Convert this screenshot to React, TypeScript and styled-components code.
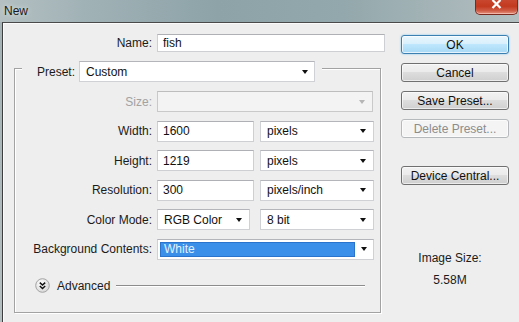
import React from "react";
import styled, { createGlobalStyle } from "styled-components";

const GlobalStyle = createGlobalStyle`
  html, body { margin: 0; padding: 0; }
  body { width: 519px; height: 322px; overflow: hidden; background: #a9b6b9; }
  * { box-sizing: border-box; }
`;

const Window = styled.div`
  width: 519px;
  height: 322px;
  display: flex;
  flex-direction: column;
  overflow: hidden;
  font-family: "Liberation Sans", Arial, sans-serif;
  font-size: 12px;
  color: #1b1b1b;
  background: linear-gradient(180deg, #a3b1b4, #b4bfc1);
`;

const TitleBar = styled.div`
  height: 22px;
  flex: none;
  display: flex;
  align-items: flex-start;
  justify-content: space-between;
  background: linear-gradient(90deg, #b4c0c2 0%, #a1b2b6 16%, #8da3a8 42%, #93a8ac 66%, #a6b5b8 86%, #b3bfc1 100%);
`;

const Title = styled.span`
  margin: 4px 0 0 4px;
  font-size: 12px;
  line-height: 14px;
  color: #1a1a1a;
  text-shadow: 0 0 5px rgba(255, 255, 255, 0.7);
`;

const CloseButton = styled.div`
  width: 43px;
  height: 15px;
  margin-right: 1px;
  border: 1px solid #7a2a1e;
  border-top: none;
  border-radius: 0 0 5px 5px;
  background: linear-gradient(180deg, #c9472f 0%, #c2391f 45%, #cf5a43 75%, #e4937f 100%);
  box-shadow: inset 0 -1px 0 rgba(255, 210, 200, 0.6);
  display: flex;
  justify-content: center;
  align-items: flex-start;
`;

const Frame = styled.div`
  flex: 1;
  min-height: 0;
  display: flex;
  padding-left: 2px;
`;

const Body = styled.div`
  flex: 1;
  display: flex;
  align-items: flex-start;
  background: #eeeeee;
  border-left: 1px solid #3e3e3e;
  border-top: 1px solid #4a4a4a;
  box-shadow: inset 1px 1px 0 #fbfbfb;
`;

const LeftColumn = styled.div`
  width: 382px;
  flex: none;
  padding: 11px 0 0 11px;
  display: flex;
  flex-direction: column;
`;

const NameRow = styled.div`
  display: grid;
  grid-template-columns: 138px 228px;
  column-gap: 5px;
  align-items: center;
`;

const Label = styled.span<{ $disabled?: boolean }>`
  text-align: right;
  white-space: nowrap;
  line-height: 14px;
  color: ${(p) => (p.$disabled ? "#a2a2a2" : "#1b1b1b")};
`;

const TextField = styled.div<{ $width?: number; $height?: number }>`
  width: ${(p) => (p.$width ? `${p.$width}px` : "100%")};
  height: ${(p) => p.$height ?? 21}px;
  background: #ffffff;
  border: 1px solid #cdcfd3;
  border-top-color: #aeb0b5;
  padding-left: 5px;
  display: flex;
  align-items: center;
  color: #111;
  line-height: 14px;
`;

const GroupBox = styled.div`
  margin-top: 16px;
  width: 367px;
  border: 1px solid #a2a2a2;
  box-shadow: 1px 1px 0 #ffffff, inset 1px 1px 0 #ffffff;
  display: flex;
  flex-direction: column;
  padding-bottom: 18px;
`;

const GroupHeader = styled.div`
  align-self: flex-start;
  margin: -8px 0 0 7px;
  padding: 0 7px 0 15px;
  display: flex;
  align-items: center;
  gap: 4px;
  background: #eeeeee;
`;

const FieldGrid = styled.div`
  margin-top: 9px;
  display: grid;
  grid-template-columns: 137px 217px;
  column-gap: 5px;
  row-gap: 8.5px;
  grid-auto-rows: 21px;
  align-items: center;
`;

const Pair = styled.div`
  display: flex;
  justify-content: space-between;
  align-items: center;
  height: 21px;
`;

const SelectBox = styled.div<{ $width?: number; $disabled?: boolean; $pad?: number }>`
  width: ${(p) => (p.$width ? `${p.$width}px` : "100%")};
  height: 21px;
  flex: none;
  display: flex;
  align-items: center;
  justify-content: space-between;
  padding: 0 ${(p) => p.$pad ?? 7}px 0 6px;
  background: ${(p) => (p.$disabled ? "#f3f3f3" : "#ffffff")};
  border: 1px solid ${(p) => (p.$disabled ? "#c9c9c9" : "#cfd1d5")};
  border-top-color: ${(p) => (p.$disabled ? "#bdbdbd" : "#b3b5ba")};
  color: #111;
  line-height: 14px;
`;

const HighlightSelect = styled(SelectBox)`
  padding: 2px 6px 2px 2px;
  align-items: stretch;
`;

const Highlight = styled.span`
  width: 195px;
  background: #3a8fe9;
  border: 1px solid #2a73cc;
  color: #e4f2ff;
  padding-left: 3px;
  display: flex;
  align-items: center;
  line-height: 14px;
`;

const Arrow = styled.span<{ $disabled?: boolean }>`
  width: 0;
  height: 0;
  flex: none;
  align-self: center;
  border-left: 3.5px solid transparent;
  border-right: 3.5px solid transparent;
  border-top: 4px solid ${(p) => (p.$disabled ? "#b5b5b5" : "#101010")};
`;

const AdvancedRow = styled.div`
  margin: 18px 15px 0 20px;
  height: 16px;
  display: flex;
  align-items: center;
`;

const AdvancedText = styled.span`
  margin-left: 7px;
  line-height: 14px;
`;

const Rule = styled.span`
  flex: 1;
  height: 1px;
  margin-left: 6px;
  background: #8c8c8c;
  box-shadow: 0 1px 0 #ffffff;
`;

const RightColumn = styled.div`
  width: 108px;
  margin-left: 16px;
  padding-top: 12px;
  display: flex;
  flex-direction: column;
  gap: 9px;
`;

const Button = styled.div<{ $primary?: boolean; $disabled?: boolean; $gapTop?: number }>`
  height: 19px;
  margin-top: ${(p) => p.$gapTop ?? 0}px;
  border-radius: 3px;
  display: flex;
  align-items: center;
  justify-content: center;
  line-height: 14px;
  color: ${(p) => (p.$disabled ? "#8c8c8c" : "#111")};
  border: 1px solid ${(p) => (p.$primary ? "#3c7fb1" : p.$disabled ? "#b5b9bc" : "#707070")};
  background: ${(p) =>
    p.$primary
      ? "linear-gradient(180deg, #eaf6fd 0%, #d9f0fc 45%, #bee6fd 50%, #a7d9f5 100%)"
      : p.$disabled
      ? "#f4f4f4"
      : "linear-gradient(180deg, #f2f2f2 0%, #ebebeb 45%, #dddddd 50%, #cfcfcf 100%)"};
  box-shadow: ${(p) =>
    p.$primary ? "inset 0 0 0 1px rgba(255,255,255,0.7), 0 0 2px #6fc3f0" : "inset 0 0 0 1px rgba(255,255,255,0.6)"};
`;

const ImageSizeBox = styled.div`
  margin: 57px 10px 0 0;
  display: flex;
  flex-direction: column;
  align-items: center;
  line-height: 14px;
`;

const SizeValue = styled.span`
  margin-top: 8px;
`;

const AdvancedIcon = () => (
  <svg width="15" height="15" viewBox="0 0 15 15">
    <defs>
      <radialGradient id="advg" cx="40%" cy="35%" r="70%">
        <stop offset="0%" stopColor="#ffffff" />
        <stop offset="100%" stopColor="#d6d6d6" />
      </radialGradient>
    </defs>
    <circle cx="7.5" cy="7.5" r="6.8" fill="url(#advg)" stroke="#a3a3a3" strokeWidth="1" />
    <path d="M4.8 4.6 L7.5 7.1 L10.2 4.6" fill="none" stroke="#111" strokeWidth="1.5" />
    <path d="M4.8 8 L7.5 10.5 L10.2 8" fill="none" stroke="#111" strokeWidth="1.5" />
  </svg>
);

const CloseX = () => (
  <svg width="11" height="9" viewBox="0 0 11 9">
    <path d="M1.5 0 L9.5 8 M9.5 0 L1.5 8" stroke="#ffffff" strokeWidth="2.2" />
  </svg>
);

const Select = ({ value, width, disabled, pad }: { value?: string; width?: number; disabled?: boolean; pad?: number }) => (
  <SelectBox $width={width} $disabled={disabled} $pad={pad}>
    <span>{value}</span>
    <Arrow $disabled={disabled} />
  </SelectBox>
);

export default function App() {
  return (
    <>
      <GlobalStyle />
      <Window>
        <TitleBar>
          <Title>New</Title>
          <CloseButton>
            <CloseX />
          </CloseButton>
        </TitleBar>
        <Frame>
          <Body>
            <LeftColumn>
              <NameRow>
                <Label>Name:</Label>
                <TextField $height={18}>fish</TextField>
              </NameRow>
              <GroupBox>
                <GroupHeader>
                  <Label>Preset:</Label>
                  <Select value="Custom" width={236} pad={6} />
                </GroupHeader>
                <FieldGrid>
                  <Label $disabled>Size:</Label>
                  <Select width={216} disabled />

                  <Label>Width:</Label>
                  <Pair>
                    <TextField $width={97}>1600</TextField>
                    <Select value="pixels" width={114} />
                  </Pair>

                  <Label>Height:</Label>
                  <Pair>
                    <TextField $width={97}>1219</TextField>
                    <Select value="pixels" width={114} />
                  </Pair>

                  <Label>Resolution:</Label>
                  <Pair>
                    <TextField $width={97}>300</TextField>
                    <Select value="pixels/inch" width={114} />
                  </Pair>

                  <Label>Color Mode:</Label>
                  <Pair>
                    <Select value="RGB Color" width={93} />
                    <Select value="8 bit" width={114} />
                  </Pair>

                  <Label>Background Contents:</Label>
                  <HighlightSelect>
                    <Highlight>White</Highlight>
                    <Arrow />
                  </HighlightSelect>
                </FieldGrid>
                <AdvancedRow>
                  <AdvancedIcon />
                  <AdvancedText>Advanced</AdvancedText>
                  <Rule />
                </AdvancedRow>
              </GroupBox>
            </LeftColumn>
            <RightColumn>
              <Button $primary>OK</Button>
              <Button>Cancel</Button>
              <Button>Save Preset...</Button>
              <Button $disabled>Delete Preset...</Button>
              <Button $gapTop={19}>Device Central...</Button>
              <ImageSizeBox>
                <span>Image Size:</span>
                <SizeValue>5.58M</SizeValue>
              </ImageSizeBox>
            </RightColumn>
          </Body>
        </Frame>
      </Window>
    </>
  );
}
